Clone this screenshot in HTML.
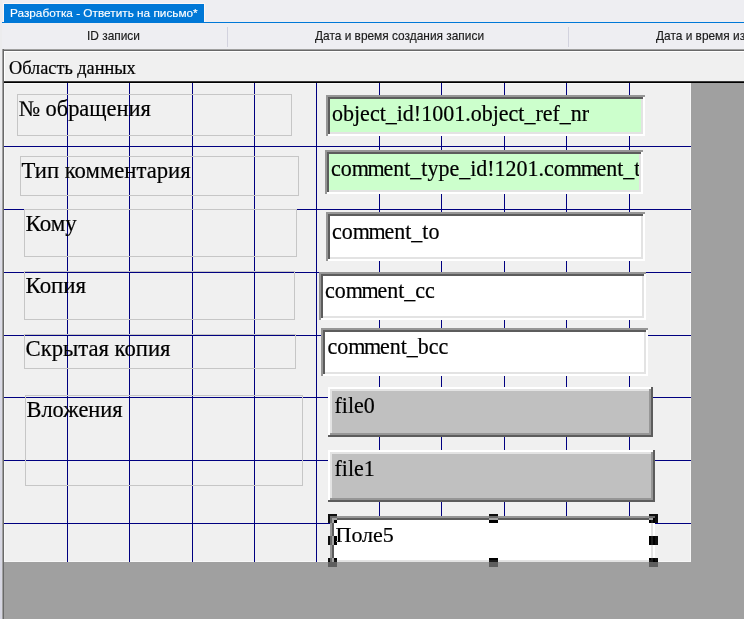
<!DOCTYPE html>
<html><head><meta charset="utf-8">
<style>
html,body{margin:0;padding:0;}
body{width:744px;height:619px;position:relative;overflow:hidden;background:#A0A0A0;}
.a{position:absolute;}
.sans{font-family:"Liberation Sans",sans-serif;white-space:pre;line-height:normal;-webkit-text-stroke:0.15px currentColor;}
.serif{position:absolute;font-family:"Liberation Serif",serif;font-size:22px;line-height:normal;color:#000;white-space:pre;-webkit-text-stroke:0.2px #000;}
.gv{position:absolute;width:1px;background:#000080;}
.gh{position:absolute;height:1px;background:#000080;}
.lbl{position:absolute;box-sizing:border-box;border:1px solid #C6C6C6;}
.hd{position:absolute;width:9px;height:9px;background:#fff;mix-blend-mode:difference;}
</style></head>
<body>

<div class="a" style="left:0px;top:0px;width:744px;height:49px;background:#EEEEF2;"></div>
<div class="a" style="left:3px;top:3px;width:202px;height:20px;background:#FBF7F7;"></div>
<div class="a" style="left:4px;top:4px;width:200px;height:19px;background:#0078D7;"></div>
<div class="a" style="left:2px;top:22px;width:742px;height:1px;background:#0078D7;"></div>
<div class="a sans" style="left:10px;top:6px;font-size:11.8px;color:#fff">Разработка - Ответить на письмо*</div>
<div class="a" style="left:227px;top:27px;width:1px;height:20px;background:#D2D2DE;"></div>
<div class="a" style="left:568px;top:27px;width:1px;height:20px;background:#D2D2DE;"></div>
<div class="a sans" style="left:87px;top:29px;font-size:11.9px;color:#1A1A1A">ID записи</div>
<div class="a sans" style="left:315px;top:29px;font-size:11.9px;color:#1A1A1A">Дата и время создания записи</div>
<div class="a sans" style="left:656px;top:29px;font-size:11.9px;color:#1A1A1A">Дата и время изменения записи</div>
<div class="a" style="left:0px;top:49px;width:744px;height:1px;background:#A0A0A0;"></div>
<div class="a" style="left:0px;top:50px;width:744px;height:1px;background:#696969;"></div>
<div class="a" style="left:4px;top:51px;width:740px;height:1px;background:#FFFFFF;"></div>
<div class="a" style="left:4px;top:52px;width:740px;height:29px;background:#F0F0F0;"></div>
<div class="a" style="left:4px;top:51px;width:1px;height:32px;background:#FFFFFF;"></div>
<div class="a" style="left:4px;top:81px;width:740px;height:1px;background:#3A3A3A;"></div>
<div class="a" style="left:4px;top:82px;width:740px;height:1px;background:#000000;"></div>
<div class="serif" style="left:9px;top:57.5px;font-size:18.3px">Область данных</div>
<div class="a" style="left:0px;top:0px;width:2px;height:619px;background:#ECECEE;background:linear-gradient(#ECECEE 0px,#ECECEE 168px,#DDDDE7 215px,#D6D6E2 619px)"></div>
<div class="a" style="left:2px;top:49px;width:1px;height:570px;background:#A0A0A0;"></div>
<div class="a" style="left:3px;top:49px;width:1px;height:570px;background:#696969;"></div>
<div class="a" style="left:4px;top:83px;width:687px;height:479px;background:#F7F7F7;"></div>
<div class="a" style="left:5px;top:84px;width:685px;height:477px;background:#F0F0F0;"></div>
<div class="gv" style="left:67px;top:83px;height:479px"></div>
<div class="gv" style="left:129px;top:83px;height:479px"></div>
<div class="gv" style="left:192px;top:83px;height:479px"></div>
<div class="gv" style="left:254px;top:83px;height:479px"></div>
<div class="gv" style="left:316px;top:83px;height:479px"></div>
<div class="gv" style="left:379px;top:83px;height:479px"></div>
<div class="gv" style="left:441px;top:83px;height:479px"></div>
<div class="gv" style="left:504px;top:83px;height:479px"></div>
<div class="gv" style="left:566px;top:83px;height:479px"></div>
<div class="gv" style="left:629px;top:83px;height:479px"></div>
<div class="gh" style="left:4px;top:146px;width:687px"></div>
<div class="gh" style="left:4px;top:209px;width:687px"></div>
<div class="gh" style="left:4px;top:272px;width:687px"></div>
<div class="gh" style="left:4px;top:335px;width:687px"></div>
<div class="gh" style="left:4px;top:397px;width:687px"></div>
<div class="gh" style="left:4px;top:460px;width:687px"></div>
<div class="gh" style="left:4px;top:523px;width:687px"></div>
<div class="lbl" style="left:17px;top:94px;width:275px;height:42px"></div>
<div class="serif" style="left:18.5px;top:96px;font-size:22.45px">№ обращения</div>
<div class="lbl" style="left:20px;top:156px;width:279px;height:40px"></div>
<div class="serif" style="left:21.5px;top:158px;font-size:22.7px">Тип комментария</div>
<div class="lbl" style="left:24px;top:209px;width:273px;height:48px"></div>
<div class="serif" style="left:25.5px;top:211px;font-size:23.0px">Кому</div>
<div class="lbl" style="left:24px;top:271px;width:271px;height:49px"></div>
<div class="serif" style="left:25.5px;top:273px;font-size:22.9px">Копия</div>
<div class="lbl" style="left:24px;top:334px;width:272px;height:35px"></div>
<div class="serif" style="left:25.5px;top:336px;font-size:22.7px">Скрытая копия</div>
<div class="lbl" style="left:25px;top:395px;width:278px;height:91px"></div>
<div class="serif" style="left:26.5px;top:397px;font-size:22.4px">Вложения</div>
<div class="a" style="left:326px;top:95px;width:319px;height:41px;background:#CCFFCC;"></div>
<div class="a" style="left:643px;top:95px;width:2px;height:41px;background:#FFFFFF;"></div>
<div class="a" style="left:326px;top:134px;width:319px;height:2px;background:#FFFFFF;"></div>
<div class="a" style="left:641px;top:97px;width:2px;height:37px;background:#E3E3E3;"></div>
<div class="a" style="left:328px;top:132px;width:315px;height:2px;background:#E3E3E3;"></div>
<div class="a" style="left:326px;top:95px;width:319px;height:2px;background:#969696;"></div>
<div class="a" style="left:326px;top:95px;width:2px;height:41px;background:#969696;"></div>
<div class="a" style="left:328px;top:97px;width:315px;height:2px;background:#5C5C5C;"></div>
<div class="a" style="left:328px;top:97px;width:2px;height:37px;background:#5C5C5C;"></div>
<div class="a" style="left:330px;top:99px;width:311px;height:33px;overflow:hidden"><div class="serif" style="left:2px;top:1px;font-size:22px;transform:scaleY(1.05);transform-origin:0 10px;">object_id!1001.object_ref_nr</div></div>
<div class="a" style="left:325px;top:150px;width:318px;height:44px;background:#CCFFCC;"></div>
<div class="a" style="left:641px;top:150px;width:2px;height:44px;background:#FFFFFF;"></div>
<div class="a" style="left:325px;top:192px;width:318px;height:2px;background:#FFFFFF;"></div>
<div class="a" style="left:639px;top:152px;width:2px;height:40px;background:#E3E3E3;"></div>
<div class="a" style="left:327px;top:190px;width:314px;height:2px;background:#E3E3E3;"></div>
<div class="a" style="left:325px;top:150px;width:318px;height:2px;background:#969696;"></div>
<div class="a" style="left:325px;top:150px;width:2px;height:44px;background:#969696;"></div>
<div class="a" style="left:327px;top:152px;width:314px;height:2px;background:#5C5C5C;"></div>
<div class="a" style="left:327px;top:152px;width:2px;height:40px;background:#5C5C5C;"></div>
<div class="a" style="left:329px;top:154px;width:310px;height:36px;overflow:hidden"><div class="serif" style="left:2px;top:1px;font-size:22px;transform:scaleY(1.05);transform-origin:0 10px;">co<span style="letter-spacing:-1.3px">m</span><span style="letter-spacing:-1.3px">m</span>ent_type_id!1201.co<span style="letter-spacing:-1.3px">m</span><span style="letter-spacing:-1.3px">m</span>ent_type</div></div>
<div class="a" style="left:326px;top:212px;width:319px;height:49px;background:#FFFFFF;"></div>
<div class="a" style="left:643px;top:212px;width:2px;height:49px;background:#FFFFFF;"></div>
<div class="a" style="left:326px;top:259px;width:319px;height:2px;background:#FFFFFF;"></div>
<div class="a" style="left:641px;top:214px;width:2px;height:45px;background:#E3E3E3;"></div>
<div class="a" style="left:328px;top:257px;width:315px;height:2px;background:#E3E3E3;"></div>
<div class="a" style="left:326px;top:212px;width:319px;height:2px;background:#969696;"></div>
<div class="a" style="left:326px;top:212px;width:2px;height:49px;background:#969696;"></div>
<div class="a" style="left:328px;top:214px;width:315px;height:2px;background:#5C5C5C;"></div>
<div class="a" style="left:328px;top:214px;width:2px;height:45px;background:#5C5C5C;"></div>
<div class="a" style="left:330px;top:216px;width:311px;height:41px;overflow:hidden"><div class="serif" style="left:2px;top:2px;font-size:22px;transform:scaleY(1.05);transform-origin:0 10px;">co<span style="letter-spacing:-1.3px">m</span><span style="letter-spacing:-1.3px">m</span>ent_to</div></div>
<div class="a" style="left:319px;top:272px;width:327px;height:48px;background:#FFFFFF;"></div>
<div class="a" style="left:644px;top:272px;width:2px;height:48px;background:#FFFFFF;"></div>
<div class="a" style="left:319px;top:318px;width:327px;height:2px;background:#FFFFFF;"></div>
<div class="a" style="left:642px;top:274px;width:2px;height:44px;background:#E3E3E3;"></div>
<div class="a" style="left:321px;top:316px;width:323px;height:2px;background:#E3E3E3;"></div>
<div class="a" style="left:319px;top:272px;width:327px;height:2px;background:#969696;"></div>
<div class="a" style="left:319px;top:272px;width:2px;height:48px;background:#969696;"></div>
<div class="a" style="left:321px;top:274px;width:323px;height:2px;background:#5C5C5C;"></div>
<div class="a" style="left:321px;top:274px;width:2px;height:44px;background:#5C5C5C;"></div>
<div class="a" style="left:323px;top:276px;width:319px;height:40px;overflow:hidden"><div class="serif" style="left:2px;top:0.5px;font-size:22px;transform:scaleY(1.05);transform-origin:0 10px;">co<span style="letter-spacing:-1.3px">m</span><span style="letter-spacing:-1.3px">m</span>ent_cc</div></div>
<div class="a" style="left:321px;top:328px;width:327px;height:48px;background:#FFFFFF;"></div>
<div class="a" style="left:646px;top:328px;width:2px;height:48px;background:#FFFFFF;"></div>
<div class="a" style="left:321px;top:374px;width:327px;height:2px;background:#FFFFFF;"></div>
<div class="a" style="left:644px;top:330px;width:2px;height:44px;background:#E3E3E3;"></div>
<div class="a" style="left:323px;top:372px;width:323px;height:2px;background:#E3E3E3;"></div>
<div class="a" style="left:321px;top:328px;width:327px;height:2px;background:#969696;"></div>
<div class="a" style="left:321px;top:328px;width:2px;height:48px;background:#969696;"></div>
<div class="a" style="left:323px;top:330px;width:323px;height:2px;background:#5C5C5C;"></div>
<div class="a" style="left:323px;top:330px;width:2px;height:44px;background:#5C5C5C;"></div>
<div class="a" style="left:325px;top:332px;width:319px;height:40px;overflow:hidden"><div class="serif" style="left:2.5px;top:0.5px;font-size:22px;transform:scaleY(1.05);transform-origin:0 10px;">co<span style="letter-spacing:-1.3px">m</span><span style="letter-spacing:-1.3px">m</span>ent_bcc</div></div>
<div class="a" style="left:328px;top:387px;width:325px;height:50px;background:#C0C0C0;"></div>
<div class="a" style="left:328px;top:387px;width:325px;height:2px;background:#FFFFFF;"></div>
<div class="a" style="left:328px;top:387px;width:2px;height:50px;background:#FFFFFF;"></div>
<div class="a" style="left:330px;top:389px;width:321px;height:2px;background:#E3E3E3;"></div>
<div class="a" style="left:330px;top:389px;width:2px;height:46px;background:#E3E3E3;"></div>
<div class="a" style="left:649px;top:389px;width:2px;height:46px;background:#969696;"></div>
<div class="a" style="left:330px;top:433px;width:321px;height:2px;background:#969696;"></div>
<div class="a" style="left:651px;top:387px;width:2px;height:50px;background:#5C5C5C;"></div>
<div class="a" style="left:328px;top:435px;width:325px;height:2px;background:#5C5C5C;"></div>
<div class="a" style="left:332px;top:391px;width:317px;height:42px;overflow:hidden"><div class="serif" style="left:2.5px;top:0.5px;font-size:22px;transform:scaleY(1.05);transform-origin:0 10px;">file0</div></div>
<div class="a" style="left:328px;top:450px;width:327px;height:52px;background:#C0C0C0;"></div>
<div class="a" style="left:328px;top:450px;width:327px;height:2px;background:#FFFFFF;"></div>
<div class="a" style="left:328px;top:450px;width:2px;height:52px;background:#FFFFFF;"></div>
<div class="a" style="left:330px;top:452px;width:323px;height:2px;background:#E3E3E3;"></div>
<div class="a" style="left:330px;top:452px;width:2px;height:48px;background:#E3E3E3;"></div>
<div class="a" style="left:651px;top:452px;width:2px;height:48px;background:#969696;"></div>
<div class="a" style="left:330px;top:498px;width:323px;height:2px;background:#969696;"></div>
<div class="a" style="left:653px;top:450px;width:2px;height:52px;background:#5C5C5C;"></div>
<div class="a" style="left:328px;top:500px;width:327px;height:2px;background:#5C5C5C;"></div>
<div class="a" style="left:332px;top:454px;width:319px;height:44px;overflow:hidden"><div class="serif" style="left:2.5px;top:0.5px;font-size:22px;transform:scaleY(1.05);transform-origin:0 10px;">file1</div></div>
<div class="a" style="left:0;top:0;width:691px;height:562px;overflow:hidden">
<div class="a" style="left:330px;top:516px;width:325px;height:48px;background:#FFFFFF;"></div>
<div class="a" style="left:653px;top:516px;width:2px;height:48px;background:#FFFFFF;"></div>
<div class="a" style="left:330px;top:562px;width:325px;height:2px;background:#FFFFFF;"></div>
<div class="a" style="left:651px;top:518px;width:2px;height:44px;background:#E3E3E3;"></div>
<div class="a" style="left:332px;top:560px;width:321px;height:2px;background:#E3E3E3;"></div>
<div class="a" style="left:330px;top:516px;width:325px;height:2px;background:#969696;"></div>
<div class="a" style="left:330px;top:516px;width:2px;height:48px;background:#969696;"></div>
<div class="a" style="left:332px;top:518px;width:321px;height:2px;background:#5C5C5C;"></div>
<div class="a" style="left:332px;top:518px;width:2px;height:44px;background:#5C5C5C;"></div>
<div class="a" style="left:334px;top:520px;width:317px;height:40px;overflow:hidden"><div class="serif" style="left:1.5px;top:2px;font-size:22px;">Поле5</div></div>
</div>
<div class="hd" style="left:328px;top:514px"></div>
<div class="hd" style="left:489px;top:514px"></div>
<div class="hd" style="left:649px;top:514px"></div>
<div class="hd" style="left:328px;top:536px"></div>
<div class="hd" style="left:649px;top:536px"></div>
<div class="hd" style="left:328px;top:558px"></div>
<div class="hd" style="left:489px;top:558px"></div>
<div class="hd" style="left:649px;top:558px"></div>
</body></html>
